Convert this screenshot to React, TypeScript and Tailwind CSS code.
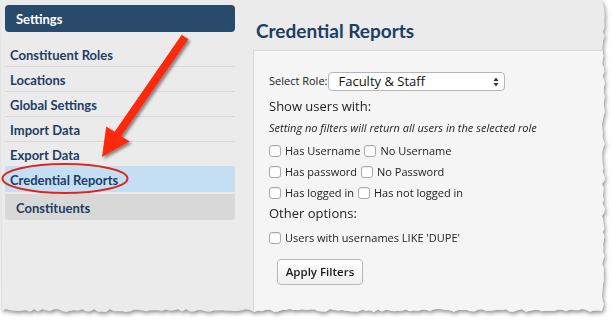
import React from "react";

const sideItems = [
  "Constituent Roles",
  "Locations",
  "Global Settings",
  "Import Data",
  "Export Data",
];

// jagged torn-paper outline for the right and bottom edges
function tornPath() {
  const pts: string[] = ["0px 0px"];
  const jit = (i: number) => Math.sin(i * 12.9898) * 43758.5453 % 1;
  for (let y = 0; y <= 310; y += 4) {
    pts.push(`${602 + Math.abs(jit(y)) * 3}px ${y}px`);
  }
  for (let x = 602; x >= 0; x -= 4) {
    pts.push(`${x}px ${309 + Math.abs(jit(x + 7)) * 3}px`);
  }
  return `polygon(${pts.join(",")})`;
}

function Checkbox({ label }: { label: string }) {
  return (
    <span className="flex items-center gap-[4px]">
      <span className="h-[12px] w-[12px] rounded-[3px] border border-[#a9a9a9] bg-white shadow-[inset_0_1px_1px_rgba(0,0,0,0.08)]" />
      <span>{label}</span>
    </span>
  );
}

export default function App() {
  return (
    <div className="relative h-[320px] w-[613px] overflow-hidden bg-white">
      <div className="[filter:drop-shadow(1px_2px_2px_rgba(0,0,0,0.45))]">
        <div
          className="flex h-[316px] w-[608px] bg-[#ebebeb]"
          style={{ clipPath: tornPath() }}
        >
          {/* Sidebar */}
          <aside className="ml-[5px] mt-[5px] w-[230px] font-['Lato',sans-serif] text-[13px] font-bold text-[#1e3d63]">
            <div className="flex h-[27px] items-center rounded-[4px] bg-[#284b6c] pt-[2px] pl-[11px] text-white">
              Settings
            </div>
            <ul className="mt-[10px]">
              {sideItems.map((item) => (
                <li
                  key={item}
                  className="flex h-[25px] items-center border-b border-[#d9d9d9] pt-[3px] pl-[5px]"
                >
                  {item}
                </li>
              ))}
              <li className="-mt-px flex h-[26px] items-center bg-[#c4def4] pt-[3px] pl-[5px]">
                Credential Reports
              </li>
            </ul>
            <div className="mt-[2px] flex h-[26px] items-center rounded-b-[4px] bg-[#d8d8d8] pt-[3px] pl-[11px]">
              Constituents
            </div>
          </aside>

          {/* Main */}
          <main className="ml-[18px] flex flex-1 flex-col">
            <h1 className="mt-[19px] pl-[3px] font-['Lato',sans-serif] text-[19px] leading-[24px] font-bold text-[#1b3d66]">
              Credential Reports
            </h1>
            <div className="mt-[7px] flex-1 border-t border-l border-[#d9d9d9] bg-[#f5f5f5] pt-[21px] pl-[15px] font-['Open_Sans',sans-serif] text-[11px] text-[#222]">
              <div className="flex h-[19px] items-center">
                <span>Select Role:</span>
                <span className="ml-px flex h-[19px] w-[177px] items-center justify-between rounded-[4px] border border-[#b5b5b5] bg-white pr-[5px] pl-[9px] text-[13px] text-[#111]">
                  Faculty &amp; Staff
                  <svg width="6" height="10" viewBox="0 0 6 10">
                    <path d="M3 0.5 L5.5 4 L0.5 4 Z" fill="#333" />
                    <path d="M3 9.5 L5.5 6 L0.5 6 Z" fill="#333" />
                  </svg>
                </span>
              </div>
              <div className="mt-[6px] text-[13px] leading-[18px]">
                Show users with:
              </div>
              <div className="mt-[5px] italic leading-[16px]">
                Setting no filters will return all users in the selected role
              </div>
              <div className="mt-[7px] flex flex-col gap-[5px] leading-[16px]">
                <div className="flex gap-[4px]">
                  <Checkbox label="Has Username" />
                  <Checkbox label="No Username" />
                </div>
                <div className="flex gap-[4px]">
                  <Checkbox label="Has password" />
                  <Checkbox label="No Password" />
                </div>
                <div className="flex gap-[4px]">
                  <Checkbox label="Has logged in" />
                  <Checkbox label="Has not logged in" />
                </div>
              </div>
              <div className="mt-[3px] text-[13px] leading-[18px]">
                Other options:
              </div>
              <div className="mt-[8px] leading-[16px]">
                <Checkbox label="Users with usernames LIKE 'DUPE'" />
              </div>
              <button className="mt-[13px] ml-[8px] flex h-[26px] w-[86px] items-center justify-center rounded-[4px] border border-[#b8b8b8] bg-gradient-to-b from-white to-[#f0f0f0] text-[11.5px] font-semibold text-[#1a1a1a]">
                Apply Filters
              </button>
            </div>
          </main>
        </div>
      </div>

      {/* Annotation overlay: arrow and circle */}
      <svg
        className="pointer-events-none absolute inset-0"
        width="613"
        height="320"
        viewBox="0 0 613 320"
      >
        <defs>
          <filter id="sh" x="-20%" y="-20%" width="140%" height="140%">
            <feDropShadow dx="2" dy="2" stdDeviation="1.5" floodColor="#000" floodOpacity="0.45" />
          </filter>
        </defs>
        <polygon
          points="181.7,34.7 114.6,131.7 106.2,126.6 102,157 129.6,141.4 121.2,136.3 188.3,39.3"
          fill="#fb2c10"
          filter="url(#sh)"
        />
        <ellipse
          cx="65"
          cy="178.5"
          rx="62.5"
          ry="14.5"
          fill="none"
          stroke="#e0231b"
          strokeWidth="2"
        />
      </svg>
    </div>
  );
}
